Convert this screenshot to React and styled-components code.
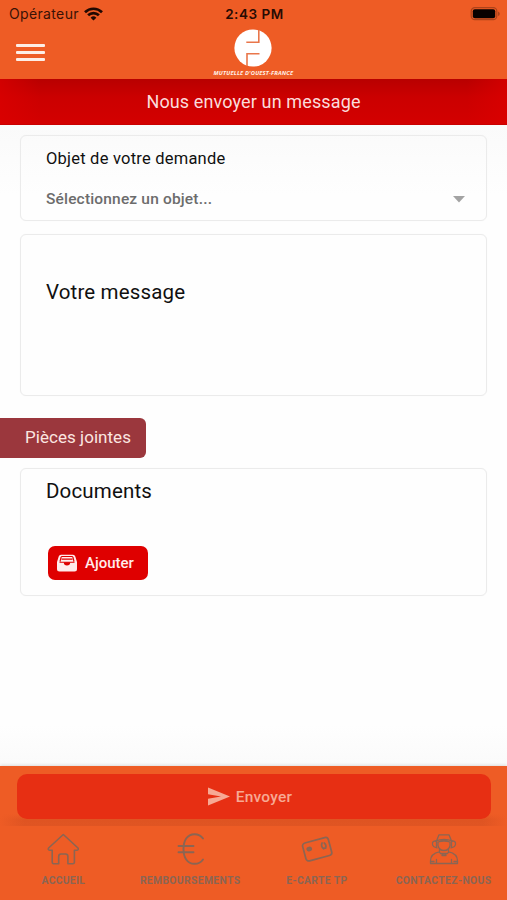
import React from 'react'
import styled, { createGlobalStyle } from 'styled-components'

const GlobalStyle = createGlobalStyle`
  * {
    box-sizing: border-box;
  }

  body {
    margin: 0;
    background: #fefefe;
    font-family: Roboto, "Liberation Sans", sans-serif;
  }
`

const Screen = styled.div`
  display: flex;
  flex-direction: column;
  width: 100%;
  height: 100vh;
  overflow: hidden;
`

const Header = styled.header`
  height: 79px;
  flex-shrink: 0;
  background: #ee5c25;
`

const StatusBar = styled.div`
  display: grid;
  grid-template-columns: 1fr auto 1fr;
  align-items: center;
  height: 27px;
  padding: 0 7px 0 9px;
  font-family: Inter, "Liberation Sans", sans-serif;
  font-size: 14px;
  color: #3a1205;

  .carrier {
    display: flex;
    align-items: center;
    gap: 5px;
    letter-spacing: 0.35px;
  }

  time {
    font-size: 13.5px;
    font-weight: 600;
    letter-spacing: 0.55px;
    color: #260b03;
  }

  .battery {
    justify-self: end;
    display: block;
  }
`

const NavBar = styled.div`
  display: grid;
  grid-template-columns: 1fr auto 1fr;
  height: 52px;
  padding: 0 16px;
`

const MenuButton = styled.button`
  display: flex;
  flex-direction: column;
  gap: 4px;
  width: 29px;
  margin-top: 17px;
  padding: 0;
  border: 0;
  background: none;

  span {
    width: 100%;
    height: 3px;
    border-radius: 1px;
    background: #fdeee6;
  }
`

const Brand = styled.div`
  display: flex;
  flex-direction: column;
  align-items: center;
  padding-top: 2px;

  svg {
    display: block;
    margin-right: 2px;
  }

  span {
    margin-top: 3px;
    font-family: "Open Sans", sans-serif;
    font-size: 5.8px;
    line-height: 7px;
    font-weight: 700;
    font-style: italic;
    letter-spacing: 0.16px;
    white-space: nowrap;
    color: #fff0e8;
  }
`

const TitleBar = styled.h1`
  display: flex;
  align-items: center;
  justify-content: center;
  flex-shrink: 0;
  height: 46px;
  margin: 0;
  border-bottom: 1px solid #c90000;
  background:
    linear-gradient(to right, rgba(220, 0, 0, 0.7), rgba(220, 0, 0, 0) 40px calc(100% - 40px), rgba(220, 0, 0, 0.7)),
    linear-gradient(#b80000, #cb0000 40%, #d30000);
  font-size: 18px;
  font-weight: 400;
  letter-spacing: 0.13px;
  color: #fbdcdc;
`

const Content = styled.main`
  flex: 1;
  padding: 10px 20px 0;
  background: linear-gradient(#fafafa, #fefefe 70px, #fefefe 600px, #fafafa);
`

const Card = styled.section`
  height: ${props => props.$height}px;
  padding: ${props => props.$top}px 21px 0 25px;
  border: 1px solid #ebebeb;
  border-radius: 6px;
  box-shadow: 0 0 1px #eee;
  color: #101010;

  & + & {
    margin-top: 13px;
  }
`

const FieldLabel = styled.div`
  font-size: ${props => (props.$large ? 20.5 : 16.5)}px;
  line-height: 24px;
  letter-spacing: ${props => (props.$large ? 0.15 : 0.22)}px;
`

const Select = styled.div`
  display: flex;
  align-items: center;
  justify-content: space-between;
  margin-top: 16px;
  font-size: 15.5px;
  line-height: 24px;
  font-weight: 500;
  letter-spacing: 0.17px;
  color: #6c6c6c;
`

const SectionTag = styled.h2`
  display: flex;
  align-items: center;
  width: 146px;
  height: 40px;
  margin: 22px 0 10px -20px;
  padding: 0 0 2px 25px;
  border-radius: 0 6px 6px 0;
  background: #9b373d;
  font-size: 17px;
  font-weight: 400;
  letter-spacing: 0.04px;
  white-space: nowrap;
  color: #fbe6e0;
`

const AddButton = styled.button`
  display: flex;
  align-items: center;
  gap: 8px;
  width: 100px;
  height: 34px;
  margin: 43px 0 0 2px;
  padding: 0 0 0 9px;
  border: 0;
  border-radius: 7px;
  background: #df0000;
  font-family: inherit;
  font-size: 15px;
  font-weight: 500;
  color: #ffecec;
`

const SendZone = styled.div`
  flex-shrink: 0;
  height: 60px;
  padding: 8px 16px 0 17px;
  background:
    linear-gradient(to right, #ee5c25, rgba(238, 92, 37, 0) 24px calc(100% - 24px), #ee5c25),
    linear-gradient(#ee5c25 48px, #df5422 54px, #e05523);
  box-shadow: 0 -1px 3px rgba(0, 0, 0, 0.12);
`

const SendButton = styled.button`
  display: flex;
  align-items: center;
  justify-content: center;
  gap: 6px;
  width: 100%;
  height: 45px;
  padding: 0 8px 0 0;
  border: 0;
  border-radius: 10px;
  background: #e72f13;
  font-family: inherit;
  font-size: 15.5px;
  font-weight: 500;
  letter-spacing: 0.25px;
  color: #f7a994;
`

const TabBar = styled.nav`
  display: grid;
  grid-template-columns: repeat(4, 1fr);
  flex-shrink: 0;
  height: 74px;
  background: #ee5c25;
`

const Tab = styled.a`
  display: flex;
  flex-direction: column;
  align-items: center;
  padding-top: 7px;
  color: #8b6553;
  font-size: 10.3px;
  line-height: 12px;
  font-weight: 700;
  letter-spacing: ${props => props.$spacing || 0}px;
  white-space: nowrap;

  svg {
    display: block;
    margin-bottom: 10px;
    fill: none;
    stroke: currentColor;
    stroke-linecap: round;
    stroke-linejoin: round;
  }
`

const WifiIcon = () => (
  <svg width="19" height="14" viewBox="0 0 19 14" fill="none" stroke="#210902" strokeWidth="2.7">
    <path d="M1 5.2a12.2 12.2 0 0 1 17 0" />
    <path d="M4.1 8.3a7.8 7.8 0 0 1 10.800 0" />
    <path d="M9.5 13.6 6.6 10.7a4.1 4.1 0 0 1 5.8 0z" fill="#210902" stroke="none" />
  </svg>
)

const BatteryIcon = () => (
  <svg className="battery" width="30" height="14" viewBox="0 0 30 14">
    <rect x="1.2" y="0.7" width="25.6" height="12" rx="3.6" fill="none" stroke="#ad431b" strokeWidth="1.2" />
    <rect x="2.8" y="2.2" width="22.4" height="9" rx="2" fill="#080100" />
    <path d="M28 4.4q1.8.6 1.8 2.3T28 9z" fill="#ad431b" />
  </svg>
)

const BrandMark = () => (
  <svg width="38" height="38" viewBox="0 0 38 38">
    <circle cx="19" cy="19" r="18.600" fill="#fff" />
    <path d="M24.8 1v12.200H12.300M13 37V24.800h12.500" fill="none" stroke="#e9764a" strokeWidth="1.600" />
  </svg>
)

const InboxIcon = () => (
  <svg width="20" height="18" viewBox="0 0 20 18">
    <path d="M4 .7h12q1.8 0 2.3 1.7L20 8v7q0 2.5-2.500 2.500h-15Q0 17.500 0 15V8l1.700-5.600Q2.200.7 4 .7z" fill="#ffecec" />
    <path d="M3 7.500 4 3.500q.2-1 1.200-1h9.600q1 0 1.200 1l1 4M4.500 5.100h11M2.500 8.200h15" fill="none" stroke="#df0000" strokeWidth="1.100" />
    <path d="M6.800 8.200h6.400a3.200 3.200 0 0 1-6.400 0z" fill="#df0000" />
  </svg>
)

const SendIcon = () => (
  <svg width="22" height="19" viewBox="0 0 22 19">
    <path d="M0 .5 22 9.500 0 18.500v-6.800l13-2.200L0 7.300z" fill="#f7a994" />
  </svg>
)

const HomeIcon = () => (
  <svg width="32" height="32" viewBox="0 0 32 32" strokeWidth="1.6">
    <path d="M16.300 1.500 1.600 15q-1 1.900 1 2.200h2.600v12q0 1.500 1.500 1.500h5V23.500q0-2.500 2.300-2.500h4.600q2.300 0 2.300 2.500v7.200h5q1.500 0 1.500-1.500v-12H30q2-.3 1-2.200z" />
  </svg>
)

const EuroIcon = () => (
  <svg width="32" height="32" viewBox="0 0 32 32" strokeWidth="1.9">
    <path d="M29 5.500C27 2.500 24 1.200 20.500 1.200c-7.500 0-11 6.500-11 14.800s3.500 14.800 11 14.800c3.500 0 6.500-1.300 8.500-4.300M4.500 13h15M4.500 19.300h15" />
  </svg>
)

const CardIcon = () => (
  <svg width="32" height="32" viewBox="0 0 32 32" strokeWidth="1.7">
    <g transform="rotate(-15 16 16)">
      <rect x="2.800" y="7" width="26.600" height="18.500" rx="3" />
      <ellipse cx="8.500" cy="14" rx="2" ry="1.500" />
      <path d="M7.200 14h2.600" />
      <path d="M22.500 11.500q-2.500 3 0 6M24.500 12q2 2.500 0 5.500M22.500 17.500l2-.5" />
    </g>
  </svg>
)

const AgentIcon = () => (
  <svg width="32" height="32" viewBox="0 0 32 32" strokeWidth="1.3">
    <path d="M8.500 8 11 1.800h10L23.500 8" />
    <path d="M7.500 8q8.500-3 17 0M10 9q6-2 12 0v3.500q-1 5-6 5t-6-5z" />
    <path d="M8 7.800q-4 0-3.500 3.500.3 3 4.500 3.500M24 7.800q4 0 3.500 3.500-.3 3-4.500 3.500M8.500 8v6M23.500 8v6" />
    <path d="M11.500 16.500v3l4.500 3 4.500-3v-3M11.500 18.800q-9 1.700-9 9v2.700h27v-2.700q0-7.300-9-9M12.500 20.500h7M14 22.500h4M8.500 26.500v4M23.500 26.500v4M3 28.500h3M26 28.500h3" />
  </svg>
)

const TABS = [
  { label: 'ACCUEIL', icon: <HomeIcon />, spacing: 0.3 },
  { label: 'REMBOURSEMENTS', icon: <EuroIcon />, spacing: 0.38 },
  { label: 'E-CARTE TP', icon: <CardIcon />, spacing: 0.4 },
  { label: 'CONTACTEZ-NOUS', icon: <AgentIcon />, spacing: 0.4 },
]

const App = () => (
  <Screen>
    <GlobalStyle />
    <Header>
      <StatusBar>
        <div className="carrier">Opérateur <WifiIcon /></div>
        <time>2:43 PM</time>
        <BatteryIcon />
      </StatusBar>
      <NavBar>
        <MenuButton aria-label="Menu"><span /><span /><span /></MenuButton>
        <Brand>
          <BrandMark />
          <span>MUTUELLE D'OUEST-FRANCE</span>
        </Brand>
      </NavBar>
    </Header>
    <TitleBar>Nous envoyer un message</TitleBar>
    <Content>
      <Card $height={86} $top={11}>
        <FieldLabel>Objet de votre demande</FieldLabel>
        <Select>
          Sélectionnez un objet...
          <svg width="12" height="7" viewBox="0 0 12 7"><path d="M0 0h12L6 6.500z" fill="#a3a3a3" /></svg>
        </Select>
      </Card>
      <Card $height={162} $top={45}>
        <FieldLabel $large>Votre message</FieldLabel>
      </Card>
      <SectionTag>Pièces jointes</SectionTag>
      <Card $height={128} $top={10}>
        <FieldLabel $large>Documents</FieldLabel>
        <AddButton><InboxIcon />Ajouter</AddButton>
      </Card>
    </Content>
    <SendZone>
      <SendButton><SendIcon />Envoyer</SendButton>
    </SendZone>
    <TabBar>
      {TABS.map(tab => (
        <Tab key={tab.label} $spacing={tab.spacing}>
          {tab.icon}
          {tab.label}
        </Tab>
      ))}
    </TabBar>
  </Screen>
)

export default App
